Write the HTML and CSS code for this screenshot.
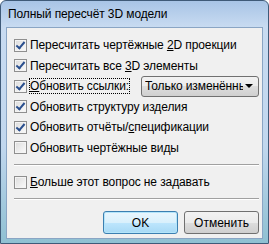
FILE: index.html
```html
<!DOCTYPE html>
<html lang="ru">
  <head>
    <meta charset="UTF-8" />
    <title>Полный пересчёт 3D модели</title>
    <link rel="stylesheet" href="styles.css">
  </head>
  <body>
    <div class="window">
      <div class="titlebar">Полный пересчёт 3D модели</div>
      <div class="client">
        <div class="options">
          <label class="row"><span class="check checked"></span><span>Пересчитать чертёжные <u>2</u>D проекции</span></label>
          <label class="row"><span class="check checked"></span><span>Пересчитать все <u>3</u>D элементы</span></label>
          <div class="row">
            <span class="check checked"></span><span class="focus"><u>О</u>бновить ссылки:</span>
            <div class="combo"><span class="combo-text">Только изменённые</span><span class="combo-arrow"></span></div>
          </div>
          <label class="row"><span class="check checked"></span><span>Обновить структуру изделия</span></label>
          <label class="row"><span class="check checked"></span><span>Обновить отчёты/<u>с</u>пецификации</span></label>
          <label class="row"><span class="check"></span><span>Обновить чертёжные виды</span></label>
        </div>
        <div class="separator"></div>
        <label class="row single"><span class="check"></span><span><u>Б</u>ольше этот вопрос не задавать</span></label>
        <div class="separator"></div>
        <div class="buttons">
          <button class="btn default" type="button">OK</button>
          <button class="btn" type="button">Отменить</button>
        </div>
      </div>
    </div>
  </body>
</html>
```

FILE: styles.css
```css
body {
  margin: 0;
  background: #ffffff;
  font-family: "Liberation Sans", Arial, sans-serif;
  font-size: 12px;
  letter-spacing: -0.1px;
  color: #000000;
}

.window {
  width: 269px;
  height: 244px;
  box-sizing: border-box;
  display: flex;
  flex-direction: column;
  border: 1px solid #3f5a78;
  border-radius: 6px 6px 0 0;
  padding: 0 5px 4px 5px;
  background: linear-gradient(#a8c4e6, #c8dbf1 26px, #c1d7ee 60%, #8fc0d2);
}

.titlebar {
  height: 26px;
  flex: none;
  display: flex;
  align-items: center;
  padding-left: 2px;
}

.client {
  flex: 1;
  border: 1px solid #8aa5c4;
  background: #f0f0f0;
  padding: 7px 3px 0 7px;
  display: flex;
  flex-direction: column;
}

.client > * {
  flex: none;
}

.options {
  display: flex;
  flex-direction: column;
}

.row {
  height: 20.5px;
  flex: none;
  display: flex;
  align-items: center;
  gap: 3px;
}

.row.single {
  height: 20px;
  margin-top: 6px;
}

.check {
  width: 11px;
  height: 11px;
  border: 1px solid #8f8f8f;
  background: linear-gradient(135deg, #dcdcdc, #fbfbfb);
  box-shadow: inset 0 0 0 1px #f4f4f4;
  position: relative;
  flex: none;
}

.check.checked::after {
  content: "";
  position: absolute;
  left: 3px;
  top: 0;
  width: 3px;
  height: 7px;
  border: solid #2a4f8e;
  border-width: 0 2px 2px 0;
  transform: rotate(40deg);
}

.focus {
  outline: 1px dotted #000000;
  outline-offset: 0;
  line-height: 14px;
}

.combo {
  margin-left: auto;
  width: 118px;
  height: 21px;
  box-sizing: border-box;
  border: 1px solid #707070;
  border-radius: 3px;
  background: linear-gradient(#f2f2f2, #ebebeb 50%, #dddddd 50%, #cfcfcf);
  display: flex;
  align-items: center;
  padding-left: 3px;
  overflow: hidden;
}

.combo-text {
  flex: 1;
  white-space: nowrap;
  overflow: hidden;
}

.combo-arrow {
  width: 0;
  height: 0;
  border-left: 4px solid transparent;
  border-right: 4px solid transparent;
  border-top: 4px solid #000000;
  margin: 0 5px 0 2px;
}

.separator {
  height: 1px;
  background: #a0a0a0;
  border-bottom: 1px solid #ffffff;
  margin-top: 6px;
}

.buttons {
  display: flex;
  justify-content: flex-end;
  gap: 6px;
  margin-top: 11px;
}

.btn {
  width: 75px;
  height: 23px;
  font-family: inherit;
  font-size: 12px;
  border: 1px solid #707070;
  border-radius: 3px;
  background: linear-gradient(#f2f2f2, #ebebeb 50%, #dddddd 50%, #cfcfcf);
  padding: 0;
}

.btn.default {
  border-color: #3c7fb1;
  box-shadow: inset 0 0 0 1px #b4e5fa;
  background: linear-gradient(#eaf6fd, #d9f0fc 50%, #bee6fd 50%, #a7d9f5);
}
```
